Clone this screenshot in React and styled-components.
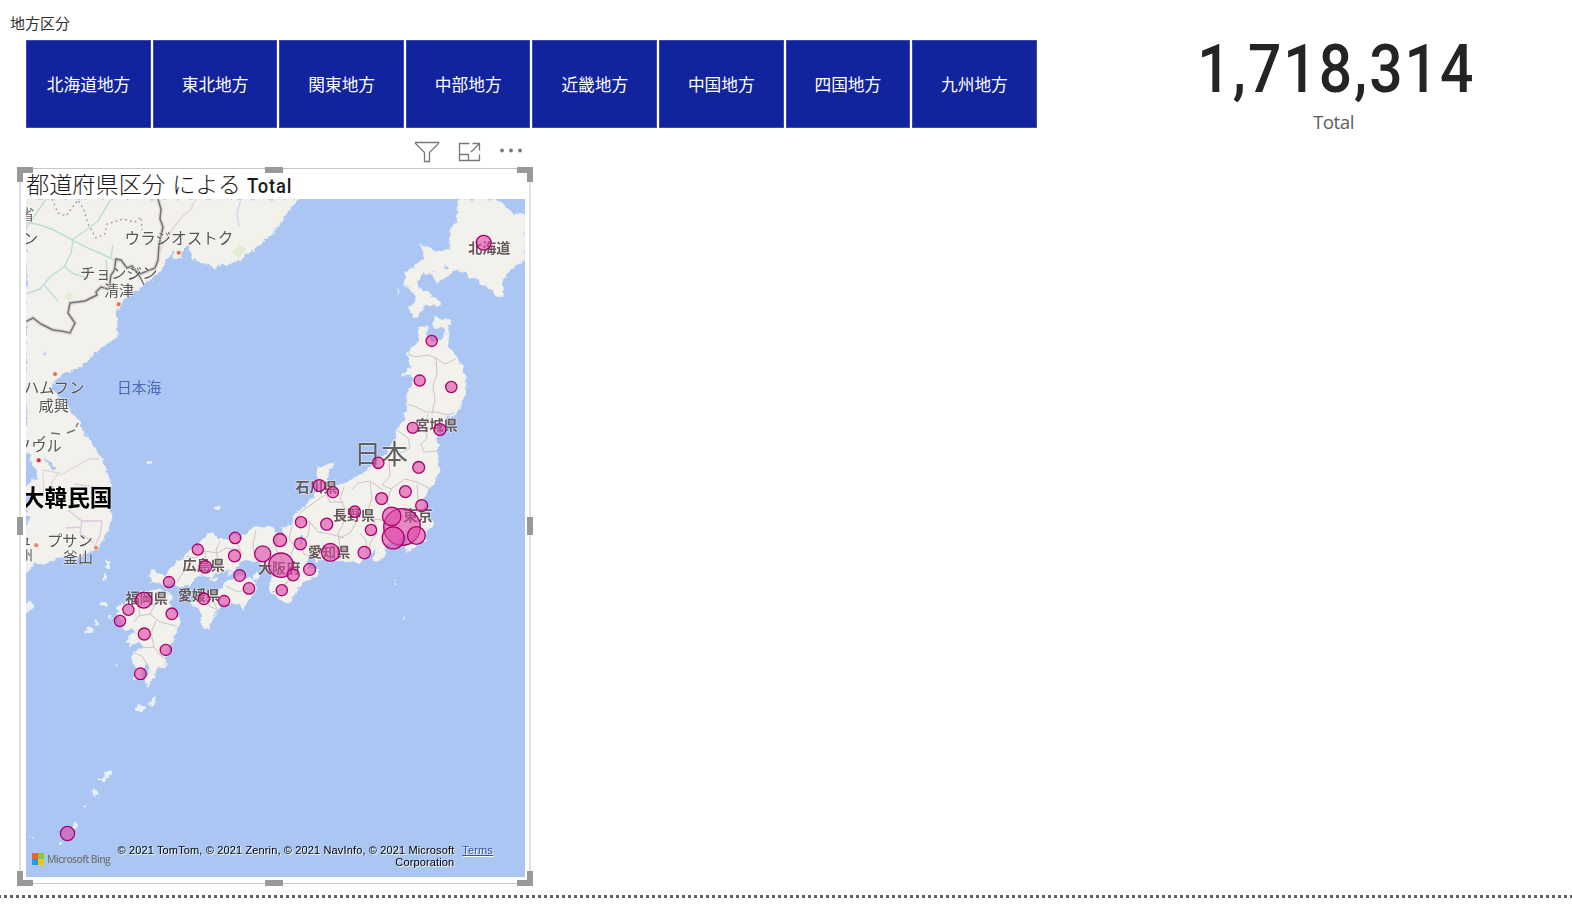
import React from "react";
import styled, { createGlobalStyle } from "styled-components";

const GlobalStyle = createGlobalStyle`
  * { box-sizing: border-box; }
  body {
    margin: 0;
    background: #fff;
    color: #252423;
    font-family: "Open Sans", "Noto Sans CJK JP", sans-serif;
    overflow: hidden;
  }
`;

const Report = styled.main`
  width: 1572px;
  height: 914px;
  display: flex;
  flex-direction: column;
  background: #fff;
`;

const TopRow = styled.div`
  display: flex;
  height: 137px;
`;

const Slicer = styled.section`
  width: 1036.7px;
  padding: 13px 0 0 10px;
`;

const SlicerTitle = styled.h2`
  margin: 0;
  height: 27px;
  font: 400 15px/20px "Noto Sans CJK JP", sans-serif;
  color: #33312f;
`;

const Tiles = styled.div`
  display: grid;
  grid-template-columns: repeat(8, 1fr);
  gap: 2px;
  height: 88px;
  padding-left: 16.3px;
`;

const Tile = styled.button`
  border: 1px solid #3b49ae;
  border-radius: 0;
  padding: 0;
  background: #12239e;
  color: #fff;
  font: 400 16.7px/24px "Noto Sans CJK JP", sans-serif;
`;

const Card = styled.section`
  width: 300px;
  margin-left: 147.3px;
  padding-top: 29px;
  display: flex;
  flex-direction: column;
  align-items: center;
`;

const CardValue = styled.div`
  font: 500 67.5px/80px Roboto, sans-serif;
  letter-spacing: 2.3px;
  white-space: nowrap;
  color: #252423;
  transform: translateX(2.6px) scaleX(0.87);
`;

const CardLabel = styled.div`
  font: 400 18.8px/26px "Open Sans", sans-serif;
  letter-spacing: -0.5px;
  margin-left: -1px;
  color: #605e5c;
  text-align: center;
`;

const Toolbar = styled.div`
  display: flex;
  align-items: center;
  justify-content: flex-end;
  gap: 18px;
  width: 522px;
  height: 30px;
`;

const Frame = styled.section`
  position: relative;
  width: 512px;
  height: 716px;
  margin: 1px 0 0 19px;
  padding: 0 4px 6px 5px;
  border: solid #e1e1e1;
  border-width: 1px 2px;
  border-top-color: #c8c8c8;
  border-bottom-color: #c8c8c8;
`;

const VisualTitle = styled.h1`
  margin: 0;
  height: 30px;
  display: flex;
  align-items: flex-start;
  gap: 7px;
  font: 300 23.2px/28px "Noto Sans CJK JP", sans-serif;
  color: #1c1b1a;
  white-space: nowrap;

  em {
    font: 500 19.5px/30px Roboto, sans-serif;
    letter-spacing: 0.9px;
    padding-top: 3px;
    margin-left: -1px;
    transform: scaleX(0.94);
    transform-origin: left;
  }
`;

const MapArea = styled.div`
  position: relative;
  width: 499px;
  height: 678px;
  background: #abc6f2;

  > svg { display: block; }
`;

const Attribution = styled.footer`
  position: absolute;
  left: 6px;
  right: 32px;
  bottom: 7px;
  height: 26px;
  display: flex;
  align-items: flex-start;
  font: 11px/12px "Liberation Sans", Arial, sans-serif;
  letter-spacing: 0.14px;
  color: #000;
  text-shadow: 1px 1px 0 rgba(255, 255, 255, 0.9);
`;

const BingLogo = styled.span`
  display: flex;
  align-items: center;
  gap: 3px;
  margin-top: 8px;
  width: 80px;
  flex: none;
  font: 600 10.3px/14px "Open Sans", sans-serif;
  letter-spacing: -0.62px;
  color: #777;
  text-shadow: none;
  white-space: nowrap;

  svg { flex: none; }
`;

const Copyright = styled.span`
  flex: 1;
  text-align: right;
`;

const Terms = styled.a`
  margin-left: 8px;
  color: #3a4fa8;
  text-decoration: underline;
`;

const Corner = styled.i`
  position: absolute;
  width: 16px;
  height: 15px;
  border: 0 solid #999;
  ${(p) => (p.$v === "top" ? "top: -2px; border-top-width: 6px;" : "bottom: -3px; border-bottom-width: 6px;")}
  ${(p) => (p.$h === "left" ? "left: -4px; border-left-width: 6px;" : "right: -4px; border-right-width: 6px;")}
`;

const Grip = styled.i`
  position: absolute;
  background: #999;
  ${(p) => p.$side === "top" && "top: -2px; left: 244px; width: 18px; height: 6px;"}
  ${(p) => p.$side === "bottom" && "bottom: -3px; left: 244px; width: 18px; height: 6px;"}
  ${(p) => p.$side === "left" && "left: -4px; top: 348px; width: 6px; height: 18px;"}
  ${(p) => p.$side === "right" && "right: -4px; top: 348px; width: 6px; height: 18px;"}
`;

const PageBreak = styled.hr`
  width: 100%;
  height: 3px;
  margin: 11px 0 0;
  border: 0;
  background: repeating-linear-gradient(90deg, #606060 0 3px, transparent 3px 6px) -2px 0;
`;

const regions = ["北海道地方", "東北地方", "関東地方", "中部地方", "近畿地方", "中国地方", "四国地方", "九州地方"];

const land = [
  // continental coast and Korean peninsula
  "26,199 299,199 288,211 283,220 273,232 260,245 248,253 240,260 232,263 215,268 207,264 200,262 192,260 190,245 186,246 183,250 180,258 173,258 173,250 168,258 162,268 153,278 143,285 135,290 125,297 120,305 117,313 117,337 112,342 105,345 95,353 82,367 72,371 65,372 55,380 53,390 65,403 78,420 82,430 87,437 93,446 98,453 107,470 110,487 108,503 112,517 110,525 107,533 103,541 97,548 90,552 78,557 65,557 52,560 42,565 35,563 27,573 26,573 26,485 30,482 38,478 36,470 31,465 32,456 26,452",
  // Hokkaido
  "460,199 457.5,210 457,222 450,228 450,250 437,252 430,247 420,244 424,257 417,265 405,272 404,285 413,292 415,303 409,307 412,317 418,316 425,305 437,307 442,303 435,297 427,292 418,287 418,278 422,274 430,273 434,278 437,283 446,277 457,270 465,273 473,278 487,287 497,295 502,297 503,280 513,268 525,260 525,215 512,212 500,203 493,199",
  // Honshu
  "434,315 443,320 451,319 448,333 448,345 457,357 463,366 465,376 467,387 464,397 462,403 457,413 450,417 444,424 437,437 438,453 439,472 435,482 428,490 424,500 425,507 428,517 435,524 427,530 425,540 413,548 407,553 405,547 409,538 404,533 398,543 391,542 385,547 385,555 378,563 374,558 376,548 368,557 358,563 342,560 330,562 336,557 323,560 317,562 311,553 306,563 311,569 320,570 317,576 303,582 296,593 290,603 280,600 270,592 270,585 274,575 273,570 267,565 253,560 243,560 233,570 220,572 210,576 200,575 190,585 180,587 173,582 167,585 152,583 150,575 152,570 158,574 166,575 172,567 178,562 188,552 197,545 204,538 212,532 220,540 231,537 243,535 253,528 273,527 277,534 285,533 282,527 292,525 295,513 305,507 313,496 321,487 317,477 317,469 325,465 333,463 330,469 326,474 328,481 342,485 350,480 360,475 370,467 383,457 393,443 397,430 405,417 407,400 408,393 413,380 411,376 403,374 412,368 407,354 411,347 417,343 419,336 418,327 427,327 428,336 432,341 442,340 446,333 443,325 438,328 433,327",
  // Shikoku
  "243,576 252,577 257,587 252,595 247,602 243,610 237,603 225,603 217,610 213,618 208,627 202,627 201,616 200,608 190,605 200,598 203,592 217,592 223,588 228,580",
  // Kyushu
  "148,590 158,590 168,593 172,598 170,606 175,612 180,618 178,627 172,640 168,650 167,657 165,670 160,665 153,678 147,687 145,680 150,670 148,662 143,668 142,680 133,678 135,670 132,653 143,648 140,640 134,645 127,643 128,637 137,634 133,627 125,630 120,617 117,607 128,602 136,598",
];

const islands = [
  [398, 291, 1.2, 3], [149.5, 462.5, 2, 1.4], [218, 508, 3, 2], [108, 565, 2.5, 5],
  [104, 577, 2, 5], [104, 604, 4, 3], [110, 618, 2, 2], [97, 623, 3, 2], [90, 630, 3.5, 3], [29, 606, 5, 4],
  [26, 609, 4, 4], [140, 708, 4, 3], [153, 701, 2, 6, 20], [131, 641, 5, 3], [108, 774, 6.5, 2.5, -45],
  [103, 779, 3, 2], [95, 793, 2, 4, -20], [84, 805, 2.5, 1.2], [75, 826, 2, 4, 30], [60, 843, 2, 3],
  [32, 837, 1.3, 1], [395, 583, 1.6, 1.5], [404, 618, 1, 2], [117, 664, 2, 1], [257, 577, 2.5, 3.5],
  [178, 575, 2, 2], [213, 579, 4, 1.5], [230, 573, 3, 1.5],
];

const prefectures = [
  "M408 354l8 3 12 -2 8 3 9 6 11 -5", "M436 358l1 16 -4 12 2 14 -3 14", "M406 404l10 3 10 5 10 0 12 3 6 -2",
  "M428 414l-3 12 2 12 -6 6 3 8 14 -1", "M397 430l11 8 2 10 -12 6 -9 8", "M389 462l1 14 -8 9 9 4 14 -10 12 3 14 7",
  "M383 490l-13 -9 -12 2 -6 7", "M370 482l2 16 -4 12 6 9 14 2 12 6", "M391 489l-4 14 9 10 12 -5 14 5",
  "M417 484l1 15 -4 10", "M344 487l-4 12 5 10 -2 16 -5 8 2 14 -8 8", "M328 481l-2 13 4 8 14 0",
  "M326 494l-14 10 -10 7 -6 8 14 3 8 10 12 2 14 4", "M310 522l-2 14 -8 6 4 12 8 4", "M368 510l-10 9 -8 14 -12 6",
  "M360 533l6 8 1 15", "M374 519l3 14 -7 10 0 14", "M387 520l-3 14 8 8", "M292 526l-3 12 5 8 -4 12 6 10 -4 10 -8 7",
  "M276 534l0 16 6 8 -2 12 10 8 -8 12 -10 2", "M256 530l-3 14 2 16", "M240 536l-3 8 5 9 -3 9", "M241 550l-14 -2 -10 5 -12 -2 -10 7 -9 -2",
  "M220 541l-4 9 3 14 -1 9", "M205 551l1 12 -5 12", "M183 556l3 12 -9 14",
  "M218 592l-5 8 4 9", "M226 586l12 6 10 -4 6 3", "M203 593l7 14 7 2",
  "M137 600l3 14 -6 8", "M145 594l9 12 -4 8 -11 2", "M154 606l10 -10", "M150 614l10 8 17 4", "M156 621l-5 12 3 14 -14 1",
  "M154 647l6 8 7 5", "M132 652l10 4 6 10",
];

const bubbles = [
  [483.7, 242.7, 7.4], [431.7, 340.9, 5.6], [419.7, 380.6, 5.6], [451.3, 387, 5.6], [412.7, 427.8, 5.5],
  [440, 429.5, 5.9], [378.3, 462.8, 5.7], [418.7, 467.4, 5.9], [319.3, 485.5, 5.9], [332.9, 492.2, 5.6],
  [381.6, 498.5, 5.9], [405.4, 491.6, 5.9], [421.7, 505.6, 6], [354.8, 511.7, 5.7], [301, 522.2, 5.6],
  [326.7, 524.2, 6], [371, 530, 5.6], [402, 527, 18.3], [391.7, 516.4, 9.3], [393.2, 537.9, 11],
  [416.4, 535.5, 8.9], [280, 540.1, 6.6], [300.4, 543.8, 6], [330.4, 552.4, 8.9], [364.3, 552.6, 6.2],
  [281, 565.2, 12.2], [293.2, 574.8, 6], [309.6, 569.4, 6], [281.8, 590.2, 5.6], [197.8, 549.6, 5.6],
  [235.1, 537.9, 5.7], [234.5, 555.8, 6], [262.7, 553.8, 8], [205.3, 566.8, 6.2], [239.7, 575.5, 5.8],
  [249, 588.4, 5.7], [169, 582.1, 5.6], [143.7, 600.1, 8], [203.9, 598.8, 5.8], [224.1, 601.1, 5.6],
  [128.4, 609.8, 5.6], [120, 621, 5.6], [171.8, 613.8, 5.8], [144.3, 634, 6], [165.8, 649.9, 5.6],
  [140.4, 673.8, 5.9], [67.5, 833.5, 7.1],
];

// text, left edge, baseline, font size, colour, weight
const labels = [
  ["省", 20, 219.5, 14.5, "#6f6666", 400], ["ン", 23, 243.5, 15, "#555", 400],
  ["ウラジオストク", 124.6, 243.5, 15.6, "#555", 400], ["チョンジン", 80, 278.5, 15.5, "#555", 400],
  ["清津", 104, 296, 15, "#555", 400], ["ハムフン", 24, 392.5, 15.3, "#555", 400],
  ["咸興", 38.5, 411, 15.3, "#555", 400], ["日本海", 117, 393, 14.7, "#4a68b4", 400],
  ["ソウル", 16, 451, 15.3, "#555", 400], ["大韓民国", 21.8, 506, 22.7, "#000", 700],
  ["プサン", 47, 546, 15.3, "#555", 400], ["釜山", 63, 562.5, 15, "#555", 400],
  ["ュ", 18, 545, 14, "#555", 400], ["州", 19, 560, 14, "#555", 400],
  ["北海道", 468.2, 253, 14.1, "#65585a", 700], ["宮城県", 415.5, 430, 14.1, "#65585a", 700],
  ["日本", 354, 464, 27, "#606060", 400], ["石川県", 295.5, 492.3, 14, "#65585a", 700],
  ["長野県", 333, 520, 14, "#65585a", 700], ["東京", 403, 521, 14.8, "#65585a", 700],
  ["愛知県", 308, 557.4, 14.1, "#65585a", 700], ["大阪府", 258, 572.6, 14.1, "#65585a", 700],
  ["広島県", 182.5, 570, 14.1, "#65585a", 700], ["愛媛県", 178, 600, 14, "#65585a", 700],
  ["福岡県", 125.5, 602.8, 14.1, "#65585a", 700],
];

const cities = [
  [178.7, 252.7, "#e0764f"], [118.7, 304.3, "#e0764f"], [55, 374, "#e0764f"], [38.7, 460.3, "#cc2f3c"],
  [36.3, 545.3, "#e0885f"], [96, 547.7, "#e0885f"],
];

function FilterIcon() {
  return (
    <svg width="26" height="24" viewBox="0 0 26 24" fill="none" stroke="#777" strokeWidth="1.3">
      <path d="M1.5 2.5h23v1l-9 9v9h-5v-9l-9-9z" />
    </svg>
  );
}

function FocusIcon() {
  return (
    <svg width="24" height="24" viewBox="0 0 24 24" fill="none" stroke="#777" strokeWidth="1.3">
      <path d="M11.5 3.5h-10v17h20v-6M1.5 14.5h9v6M13 12l8.5-8.5M14.5 3.5h7v7" />
    </svg>
  );
}

function MoreIcon() {
  return (
    <svg width="22" height="24" viewBox="0 0 22 24" fill="#777">
      <circle cx="2" cy="10.5" r="1.9" />
      <circle cx="11" cy="10.5" r="1.9" />
      <circle cx="20" cy="10.5" r="1.9" />
    </svg>
  );
}

function BubbleMap() {
  return (
    <svg width="499" height="678" viewBox="26 199 499 678">
      <defs>
        <filter id="coast" x="0" y="0" width="100%" height="100%">
          <feTurbulence type="fractalNoise" baseFrequency="0.16" numOctaves="3" seed="4" result="n" />
          <feDisplacementMap in="SourceGraphic" in2="n" scale="7" xChannelSelector="R" yChannelSelector="G" />
        </filter>
      </defs>
      <g filter="url(#coast)" strokeLinejoin="round">
        {land.map((points, i) => (
          <polygon key={i} points={points} fill="#f3f1ec" stroke="#e3ebf3" strokeWidth="0.8" />
        ))}
        {islands.map(([x, y, rx, ry, turn = 0], i) => (
          <ellipse key={i} cx={x} cy={y} rx={rx} ry={ry} fill="#e9f1f5" transform={`rotate(${turn} ${x} ${y})`} />
        ))}
        <g fill="#abc6f2">
          <ellipse cx="447" cy="267" rx="2" ry="1.4" />
          <ellipse cx="434" cy="273" rx="1.6" ry="1" />
          <ellipse cx="302" cy="538" rx="2" ry="4" />
          <path d="M26 494l5 3 -2 9 -3 2zM26 515l4 4 -4 6zM32 468l6 3 -3 4zM44 458l6 4 8 7 -6 0z" />
          <circle cx="45" cy="353" r="1.8" />
        </g>
      </g>
      <g fill="none" stroke="#c9c6c2" strokeWidth="1">
        {prefectures.map((d) => <path key={d} d={d} />)}
      </g>
      <g fill="none" stroke="#bfdedb" strokeWidth="1.5">
        <path d="M26 222l14 3 14 5 18 10 16 8 14 6 16 8" />
        <path d="M72 240l14 -10 12 -9 7 -12 6 -10" />
        <path d="M73 241l-2 12 -7 14 -14 10 -10 12 -14 5" />
        <path d="M64 266l10 8 14 4M44 285l14 16M106 260l1 14M111 257l2 -12M26 228l14 -20 6 -9" />
      </g>
      <g fill="none" stroke="#a9a4a6" strokeWidth="1.4" strokeDasharray="2 3">
        <path d="M52 199l6 14 8 3 6 -8 6 -8 6 10 4 14 8 14 9 -4 2 -10 16 -5 12 3 6 -5 1 13" />
      </g>
      <g fill="none" stroke="#cbc8c8" strokeWidth="4" opacity="0.6">
        <path d="M158 199l3 10 -1 10 3 8 -4 18 -1 15 -3 8 -15 6 -4 -3 -4 -5 -5 2 -6 -8 -5 -1 -2 12 -3 4 -2 14 -8 -2 -5 5 1 3 -12 6 -15 2 -2 10 7 10 -5 10 -9 -2 -8 -1 -12 -6 -8 -6 -8 4 -4 10" />
      </g>
      <g fill="none" stroke="#777477" strokeWidth="1.5">
        <path d="M158 199l3 10 -1 10 3 8 -4 18 -1 15 -3 8 -15 6 -4 -3 -4 -5 -5 2 -6 -8 -5 -1 -2 12 -3 4 -2 14 -8 -2 -5 5 1 3 -12 6 -15 2 -2 10 7 10 -5 10 -9 -2 -8 -1 -12 -6 -8 -6 -8 4 -4 10" />
        <path d="M135 270l5 7 4 8M45 436l-5 5M51 433l9 1M67 433l8 -3M76 427l2 -4" />
      </g>
      <g fill="none" stroke="#e6d0e4" strokeWidth="1.3">
        <path d="M196 199l-5 10 -9 8 -8 10 -9 12 -5 14" />
        <path d="M60 475l15 -8 14 -8 10 0M108 490l-10 -3 -24 -3M44 494l-1 -24 16 3 -8 10 4 10" />
        <path d="M68 510l14 11 20 0 -2 14 -5 11M82 521l-2 12 14 10M80 527l-14 1" stroke="#dcc8dc" />
      </g>
      <path d="M241 199l-4 14 2 14" fill="none" stroke="#c9d4ee" strokeWidth="1.2" />
      <path d="M232 253l7 -9 7 5 -7 10zM64 296l5 -4 5 4 -5 5z" fill="#e3edd0" />
      {cities.map(([x, y, color]) => (
        <circle key={x} cx={x} cy={y} r="2.5" fill={color} stroke="#fff" strokeWidth="0.7" />
      ))}
      <g fontFamily='"Noto Sans CJK JP", sans-serif' paintOrder="stroke" strokeLinejoin="round">
        {labels.map(([text, x, y, size, fill, weight]) => (
          <text
            key={text}
            x={x}
            y={y}
            fontSize={size}
            fill={fill}
            fontWeight={weight}
            stroke={text === "日本海" ? "none" : "rgba(255,255,255,.45)"}
            strokeWidth="1.5"
          >
            {text}
          </text>
        ))}
      </g>
      <g fill="#e044a7" fillOpacity="0.6" stroke="#a8006e" strokeWidth="1.3">
        {bubbles.map(([x, y, r]) => <circle key={`${x}-${y}`} cx={x} cy={y} r={r} />)}
      </g>
    </svg>
  );
}

export default function App() {
  return (
    <Report>
      <GlobalStyle />
      <TopRow>
        <Slicer>
          <SlicerTitle>地方区分</SlicerTitle>
          <Tiles>
            {regions.map((name) => <Tile key={name}>{name}</Tile>)}
          </Tiles>
        </Slicer>
        <Card>
          <CardValue>1,718,314</CardValue>
          <CardLabel>Total</CardLabel>
        </Card>
      </TopRow>
      <Toolbar>
        <FilterIcon />
        <FocusIcon />
        <MoreIcon />
      </Toolbar>
      <Frame>
        <VisualTitle>
          <span>都道府県区分</span>
          <span>による</span>
          <em>Total</em>
        </VisualTitle>
        <MapArea>
          <BubbleMap />
          <Attribution>
            <BingLogo>
              <svg width="12" height="12" viewBox="0 0 12 12">
                <path fill="#f4642a" d="M0 0h6v6H0z" />
                <path fill="#8cc43f" d="M6 0h6v6H6z" />
                <path fill="#00a8ee" d="M0 6h6v6H0z" />
                <path fill="#ffc20e" d="M6 6h6v6H6z" />
              </svg>
              Microsoft Bing
            </BingLogo>
            <Copyright>© 2021 TomTom, © 2021 Zenrin, © 2021 NavInfo, © 2021 Microsoft Corporation</Copyright>
            <Terms>Terms</Terms>
          </Attribution>
        </MapArea>
        <Corner $v="top" $h="left" />
        <Corner $v="top" $h="right" />
        <Corner $v="bottom" $h="left" />
        <Corner $v="bottom" $h="right" />
        <Grip $side="top" />
        <Grip $side="bottom" />
        <Grip $side="left" />
        <Grip $side="right" />
      </Frame>
      <PageBreak />
    </Report>
  );
}
